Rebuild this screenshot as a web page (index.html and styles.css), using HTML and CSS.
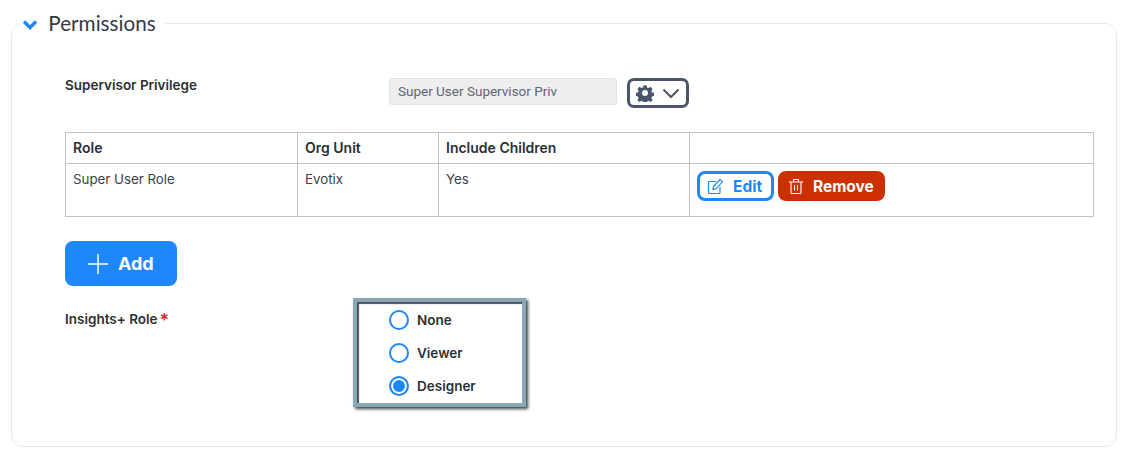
FILE: index.html
```html
<!DOCTYPE html>
<html lang="en">
<head>
  <meta charset="UTF-8" />
  <title>Permissions</title>
  <link rel="stylesheet" href="styles.css">
</head>
<body>
  <fieldset class="panel">
    <legend class="panel-title">
      <svg class="chevron" width="16" height="12" viewBox="0 0 16 12"><path d="M2 2.500 8 8.500 14 2.500" fill="none" stroke="#1e88fb" stroke-width="3.400"/></svg>
      Permissions
    </legend>

    <div class="priv-row">
      <div class="field-label">Supervisor Privilege</div>
      <div class="priv-input">Super User Supervisor Priv</div>
      <button class="gear-btn">
        <svg width="18" height="18" viewBox="0 0 24 24"><path fill="#4a5568" fill-rule="evenodd" d="M10 1.500h4l.6 3 2.200.9 2.600-1.700 2.800 2.800-1.700 2.600.9 2.200 3 .6v4l-3 .6-.9 2.200 1.700 2.600-2.800 2.800-2.600-1.700-2.200.9-.6 3h-4l-.6-3-2.200-.9-2.600 1.700-2.800-2.800 1.700-2.600-.9-2.200-3-.6v-4l3-.6.9-2.200-1.700-2.600 2.800-2.800 2.600 1.700 2.200-.9zM12 8a4 4 0 1 0 0 8 4 4 0 0 0 0-8z"/></svg>
        <svg width="18" height="11" viewBox="0 0 18 11"><path d="M1.500 1.500 9 9l7.500-7.500" fill="none" stroke="#4a5568" stroke-width="2"/></svg>
      </button>
    </div>

    <table class="roles">
      <thead>
        <tr>
          <th class="col-role">Role</th>
          <th class="col-org">Org Unit</th>
          <th class="col-inc">Include Children</th>
          <th></th>
        </tr>
      </thead>
      <tbody>
        <tr>
          <td>Super User Role</td>
          <td>Evotix</td>
          <td>Yes</td>
          <td>
            <div class="actions">
              <button class="btn-edit">
                <svg width="17" height="17" viewBox="0 0 17 17" fill="none" stroke="#1e88fb" stroke-width="1.200"><path d="M9 3.500H2.500a1 1 0 0 0-1 1v10a1 1 0 0 0 1 1h9.500a1 1 0 0 0 1-1V9"/><path d="M6.500 8.500 13 1.500l2.500 2.300-6.500 7-3 .8z"/></svg>
                Edit
              </button>
              <button class="btn-remove">
                <svg width="16" height="17" viewBox="0 0 16 17" fill="none" stroke="#fff" stroke-width="1.100"><path d="M1 4h14M5.500 4V1.500h5V4M3 4v10.500a1 1 0 0 0 1 1h8a1 1 0 0 0 1-1V4M6.500 7v5.500M9.500 7v5.500"/></svg>
                Remove
              </button>
            </div>
          </td>
        </tr>
      </tbody>
    </table>

    <button class="btn-add">
      <svg width="22" height="22" viewBox="0 0 22 22"><path d="M11 1v20M1 11h20" stroke="#fff" stroke-width="1.500"/></svg>
      Add
    </button>

    <div class="role-row">
      <div class="field-label role-label">Insights+ Role<span class="req">*</span></div>
      <div class="radio-box">
        <div class="radio-item"><span class="radio"></span>None</div>
        <div class="radio-item"><span class="radio"></span>Viewer</div>
        <div class="radio-item"><span class="radio checked"></span>Designer</div>
      </div>
    </div>
  </fieldset>
</body>
</html>
```

FILE: styles.css
```css
body {
  margin: 0;
  background: #fff;
  font-family: 'Inter', 'Noto Sans', sans-serif;
  color: #2b2f36;
}
.panel {
  width: 1106px;
  height: 436px;
  box-sizing: border-box;
  margin: 11px 0 0 11px;
  padding: 0 22px 0 53px;
  border: 1px solid #e6eaef;
  border-radius: 12px;
}
.panel-title {
  margin-left: -43px;
  padding: 0 9px 0 0;
  font-family: 'Lato', sans-serif;
  font-size: 20.700px;
  line-height: 24px;
  color: #333a45;
}
.chevron {
  margin-right: 5px;
  vertical-align: 0;
}
.priv-row {
  display: flex;
  align-items: flex-start;
  margin-top: 43px;
}
.field-label {
  font-size: 13.500px;
  font-weight: 600;
  color: #2b2f36;
}
.priv-row .field-label {
  width: 324px;
  line-height: 14px;
}
.priv-input {
  width: 228px;
  height: 27px;
  box-sizing: border-box;
  background: #eeeeee;
  border: 1px solid #e2e2e2;
  border-radius: 3px;
  padding-left: 8px;
  font-family: 'Roboto', sans-serif;
  font-size: 13.500px;
  line-height: 24px;
  color: #5f6672;
}
.gear-btn {
  display: flex;
  align-items: center;
  gap: 8px;
  width: 62px;
  height: 30px;
  box-sizing: border-box;
  margin-left: 10px;
  padding: 0 0 0 6px;
  background: #fff;
  border: 3px solid #4a5568;
  border-radius: 7px;
}
.roles {
  width: 1029px;
  margin-top: 24px;
  border-collapse: collapse;
  table-layout: fixed;
  font-size: 13.300px;
}
.roles th,
.roles td {
  border: 1px solid #c4c4c4;
  padding: 0 7px;
  text-align: left;
  vertical-align: top;
}
.roles th {
  height: 30px;
  line-height: 30px;
  font-size: 14px;
  font-weight: 600;
  color: #2b2f36;
}
.roles td {
  height: 53px;
  padding-top: 7px;
  box-sizing: border-box;
  color: #3b414b;
}
.col-role { width: 217px; }
.col-org { width: 126px; }
.col-inc { width: 236px; }
.actions {
  display: flex;
  gap: 4px;
}
.btn-edit,
.btn-remove {
  display: flex;
  align-items: center;
  gap: 9px;
  height: 30px;
  box-sizing: border-box;
  border-radius: 8px;
  font-family: inherit;
  font-size: 15.500px;
  font-weight: 700;
}
.btn-edit {
  width: 77px;
  padding: 0 0 0 7px;
  background: #fff;
  border: 3px solid #1e88fb;
  color: #1e88fb;
}
.btn-remove {
  width: 107px;
  padding: 0 0 0 10px;
  background: #cc3000;
  border: none;
  color: #fff;
}
.btn-add {
  display: flex;
  align-items: center;
  gap: 9px;
  width: 112px;
  height: 45px;
  margin-top: 24px;
  padding: 0 0 0 22px;
  background: #1e88fb;
  border: none;
  border-radius: 8px;
  color: #fff;
  font-family: inherit;
  font-size: 18px;
  font-weight: 700;
}
.role-row {
  display: flex;
  align-items: flex-start;
  margin-top: 12px;
}
.role-label {
  width: 288px;
  padding-top: 13px;
}
.req {
  color: #e8232a;
  margin-left: 2px;
  font-size: 18px;
  line-height: 0;
  vertical-align: -3px;
}
.radio-box {
  display: flex;
  flex-direction: column;
  gap: 11px;
  width: 173px;
  height: 109px;
  box-sizing: border-box;
  padding: 7px 0 0 32px;
  border: 4px solid #87a8b9;
  box-shadow: inset 2px 2px 1px #4a5056, 2px 2px 3px #3c4044;
}
.radio-item {
  display: flex;
  align-items: center;
  gap: 8px;
  height: 22px;
  font-size: 13.500px;
  font-weight: 600;
}
.radio {
  width: 20px;
  height: 20px;
  box-sizing: border-box;
  border: 2px solid #1e88fb;
  border-radius: 50%;
  background: #fff;
}
.radio.checked {
  background: #1e88fb;
  box-shadow: inset 0 0 0 2px #fff;
}
```
